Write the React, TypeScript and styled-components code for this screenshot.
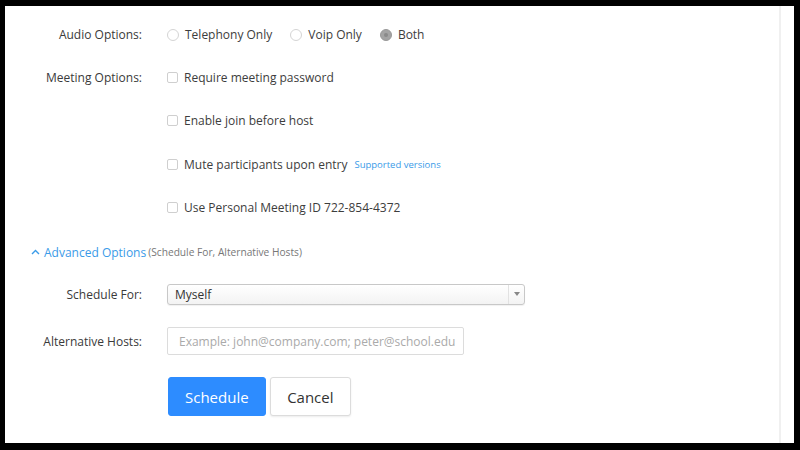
import React from "react";
import styled, { createGlobalStyle } from "styled-components";

const Global = createGlobalStyle`
  html, body { margin: 0; padding: 0; background: #000; }
  body { font-family: "Open Sans", "Liberation Sans", sans-serif; }
  * { box-sizing: border-box; }
`;

const Frame = styled.div`
  width: 800px;
  height: 450px;
  background: #000;
  padding: 6px 6px 7px 5px;
`;

const Panel = styled.div`
  width: 100%;
  height: 100%;
  background: #fff;
  display: flex;
`;

const Content = styled.div`
  flex: 1;
  padding-top: 7px;
  display: flex;
  flex-direction: column;
`;

const SideStrip = styled.div`
  width: 15px;
  border-left: 2px solid #f0f0f0;
`;

const Row = styled.div<{ $h: number }>`
  display: grid;
  grid-template-columns: 137px 1fr;
  column-gap: 25px;
  height: ${(p) => p.$h}px;
  align-items: center;
`;

const Label = styled.div`
  text-align: right;
  font-size: 12px;
  color: #3a3a3a;
  white-space: nowrap;
`;

const Controls = styled.div`
  display: flex;
  align-items: center;
`;

const Option = styled.label<{ $space?: number }>`
  display: flex;
  align-items: center;
  gap: 6px;
  margin-right: ${(p) => (p.$space ?? 18)}px;
  font-size: 12px;
  color: #3d3d3d;
  white-space: nowrap;
`;

const Radio = styled.span<{ $checked?: boolean }>`
  width: 12px;
  height: 12px;
  border-radius: 50%;
  border: 1px solid ${(p) => (p.$checked ? "#999" : "#d4d4d4")};
  background: ${(p) => (p.$checked ? "#a4a4a4" : "#fff")};
  display: flex;
  align-items: center;
  justify-content: center;
  &::after {
    content: "";
    width: 4px;
    height: 4px;
    border-radius: 50%;
    background: ${(p) => (p.$checked ? "#8a8a8a" : "transparent")};
  }
`;

const Check = styled.span`
  width: 11px;
  height: 11px;
  border-radius: 2px;
  border: 1px solid #cfcfcf;
  background: #fff;
`;

const Hint = styled.a`
  font-size: 9.5px;
  color: #3a9be8;
  text-decoration: none;
`;

const AdvancedRow = styled.div`
  height: 46px;
  display: flex;
  align-items: center;
  padding-left: 26px;
  gap: 2px;
`;

const AdvancedLink = styled.span`
  display: flex;
  align-items: center;
  gap: 4px;
  font-size: 12px;
  color: #3a9be8;
`;

const AdvancedNote = styled.span`
  font-size: 10.2px;
  color: #777;
`;

const Select = styled.div`
  width: 358px;
  height: 21px;
  border: 1px solid #c8c8c8;
  border-radius: 3px;
  background: linear-gradient(#fff, #f3f3f3);
  display: flex;
  align-items: center;
  font-size: 12px;
  color: #333;
  box-shadow: 0 1px 1px rgba(0, 0, 0, 0.06);
`;

const SelectValue = styled.span`
  flex: 1;
  padding-left: 7px;
`;

const SelectArrow = styled.span`
  width: 16px;
  height: 100%;
  border-left: 1px solid #e2e2e2;
  display: flex;
  align-items: center;
  justify-content: center;
  &::after {
    content: "";
    border-left: 3px solid transparent;
    border-right: 3px solid transparent;
    border-top: 4px solid #888;
  }
`;

const TextInput = styled.input`
  width: 297px;
  height: 28px;
  border: 1px solid #dcdcdc;
  border-radius: 2px;
  padding: 0 8px 0 11px;
  font-family: "Open Sans", "Liberation Sans", sans-serif;
  font-size: 12px;
  color: #333;
  outline: none;
  &::placeholder { color: #aaa; }
`;

const Buttons = styled.div`
  display: flex;
  gap: 4px;
  padding-top: 8px;
  padding-left: 163px;
`;

const Button = styled.button<{ $primary?: boolean }>`
  height: 39px;
  padding: 0 ${(p) => (p.$primary ? 16 : 16.5)}px;
  border-radius: 3px;
  border: 1px solid ${(p) => (p.$primary ? "#2d8cff" : "#dcdcdc")};
  background: ${(p) => (p.$primary ? "#2d8cff" : "#fff")};
  color: ${(p) => (p.$primary ? "#fff" : "#333")};
  font-family: "Open Sans", "Liberation Sans", sans-serif;
  font-size: 15px;
  box-shadow: ${(p) => (p.$primary ? "none" : "0 1px 2px rgba(0,0,0,0.08)")};
`;

const Caret = () => (
  <svg width="9" height="6" viewBox="0 0 9 6" fill="none">
    <path d="M1 5 L4.5 1.5 L8 5" stroke="#3a9be8" strokeWidth="1.4" />
  </svg>
);

export default function App() {
  return (
    <>
      <Global />
      <Frame>
        <Panel>
          <Content>
            <Row $h={43}>
              <Label>Audio Options:</Label>
              <Controls>
                <Option><Radio />Telephony Only</Option>
                <Option><Radio />Voip Only</Option>
                <Option><Radio $checked />Both</Option>
              </Controls>
            </Row>
            <Row $h={43}>
              <Label>Meeting Options:</Label>
              <Controls>
                <Option><Check />Require meeting password</Option>
              </Controls>
            </Row>
            <Row $h={43}>
              <Label />
              <Controls>
                <Option><Check />Enable join before host</Option>
              </Controls>
            </Row>
            <Row $h={44}>
              <Label />
              <Controls>
                <Option $space={7}><Check />Mute participants upon entry</Option>
                <Hint>Supported versions</Hint>
              </Controls>
            </Row>
            <Row $h={43}>
              <Label />
              <Controls>
                <Option><Check />Use Personal Meeting ID 722-854-4372</Option>
              </Controls>
            </Row>
            <AdvancedRow>
              <AdvancedLink><Caret />Advanced Options</AdvancedLink>
              <AdvancedNote>(Schedule For, Alternative Hosts)</AdvancedNote>
            </AdvancedRow>
            <Row $h={38}>
              <Label>Schedule For:</Label>
              <Controls>
                <Select>
                  <SelectValue>Myself</SelectValue>
                  <SelectArrow />
                </Select>
              </Controls>
            </Row>
            <Row $h={56}>
              <Label>Alternative Hosts:</Label>
              <Controls>
                <TextInput placeholder="Example: john@company.com; peter@school.edu" />
              </Controls>
            </Row>
            <Buttons>
              <Button $primary>Schedule</Button>
              <Button>Cancel</Button>
            </Buttons>
          </Content>
          <SideStrip />
        </Panel>
      </Frame>
    </>
  );
}
